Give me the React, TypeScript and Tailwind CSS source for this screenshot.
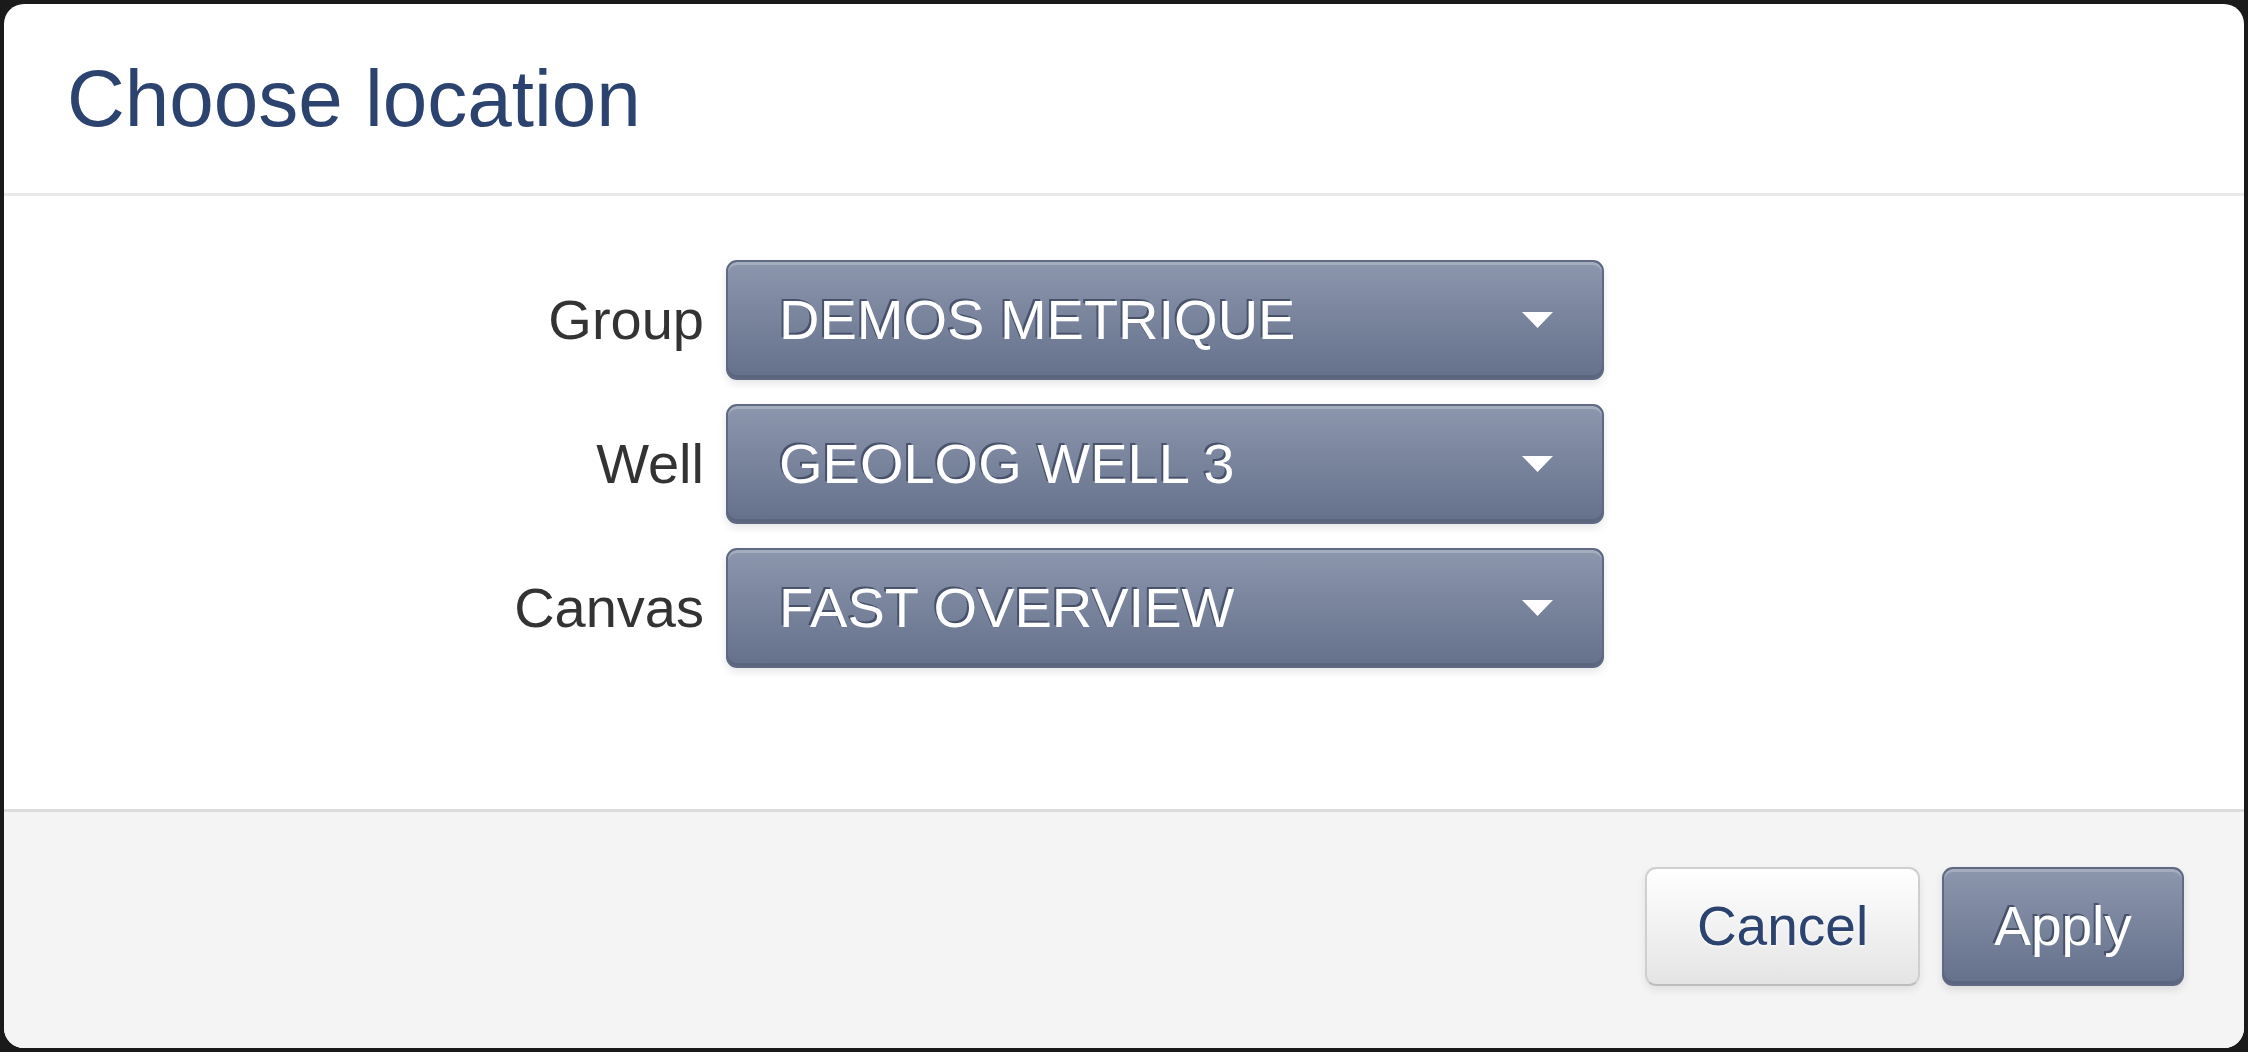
import React from 'react';

interface SelectRowProps {
  label: string;
  value: string;
}

function Caret() {
  return (
    <svg width="31" height="16" viewBox="0 0 31 16" className="shrink-0">
      <path d="M0 0 L31 0 L15.5 16 Z" fill="#ffffff" />
    </svg>
  );
}

function SelectRow({ label, value }: SelectRowProps) {
  return (
    <div className="flex items-center gap-[22px]">
      <label className="w-[700px] text-right text-[56px] leading-none text-[#333333]">
        {label}
      </label>
      <button
        type="button"
        className="flex h-[120px] w-[878px] items-center justify-between rounded-[11px] border-2 border-[#5f6983] bg-[linear-gradient(to_bottom,#8c96ad,#65708b)] pl-[51px] pr-[49px] text-[56px] leading-none text-white shadow-[inset_0_3px_0_rgba(255,255,255,0.22),inset_0_-3px_0_rgba(0,0,0,0.1),0_4px_8px_rgba(0,0,0,0.1)] [text-shadow:-2px_-2px_0_rgba(55,65,90,0.75)]"
      >
        <span>{value}</span>
        <Caret />
      </button>
    </div>
  );
}

export default function App() {
  return (
    <div
      className="h-screen w-full bg-[#1a1a1a] p-[4px]"
      style={{ fontFamily: '"Liberation Sans", Arial, sans-serif' }}
    >
      <div className="flex h-full flex-col overflow-hidden rounded-[20px] bg-white">
        {/* Header */}
        <div className="flex h-[192px] shrink-0 items-center border-b-[3px] border-[#e9e9e9] pl-[63px]">
          <h1 className="text-[80px] font-normal leading-none text-[#2c4370]">Choose location</h1>
        </div>

        {/* Body */}
        <div className="flex flex-1 flex-col gap-[24px] pt-[64px]">
          <SelectRow label="Group" value="DEMOS METRIQUE" />
          <SelectRow label="Well" value="GEOLOG WELL 3" />
          <SelectRow label="Canvas" value="FAST OVERVIEW" />
        </div>

        {/* Footer */}
        <div className="flex h-[239px] shrink-0 items-center justify-end gap-[22px] border-t-[3px] border-[#dcdcdc] bg-[#f4f4f4] pb-[8px] pr-[60px]">
          <button
            type="button"
            className="h-[119px] w-[275px] rounded-[11px] border-2 border-[#cfcfcf] border-b-[#bdbdbd] bg-[linear-gradient(to_bottom,#ffffff,#e4e4e4)] text-[55px] leading-none text-[#2c4370] shadow-[0_4px_8px_rgba(0,0,0,0.08)] [text-shadow:0_1px_3px_#ffffff]"
          >
            Cancel
          </button>
          <button
            type="button"
            className="h-[119px] w-[242px] rounded-[11px] border-2 border-[#5f6983] bg-[linear-gradient(to_bottom,#8c96ad,#65708b)] text-[55px] leading-none text-white shadow-[inset_0_3px_0_rgba(255,255,255,0.22),inset_0_-3px_0_rgba(0,0,0,0.1),0_4px_8px_rgba(0,0,0,0.1)] [text-shadow:-2px_-2px_0_rgba(55,65,90,0.75)]"
          >
            Apply
          </button>
        </div>
      </div>
    </div>
  );
}
